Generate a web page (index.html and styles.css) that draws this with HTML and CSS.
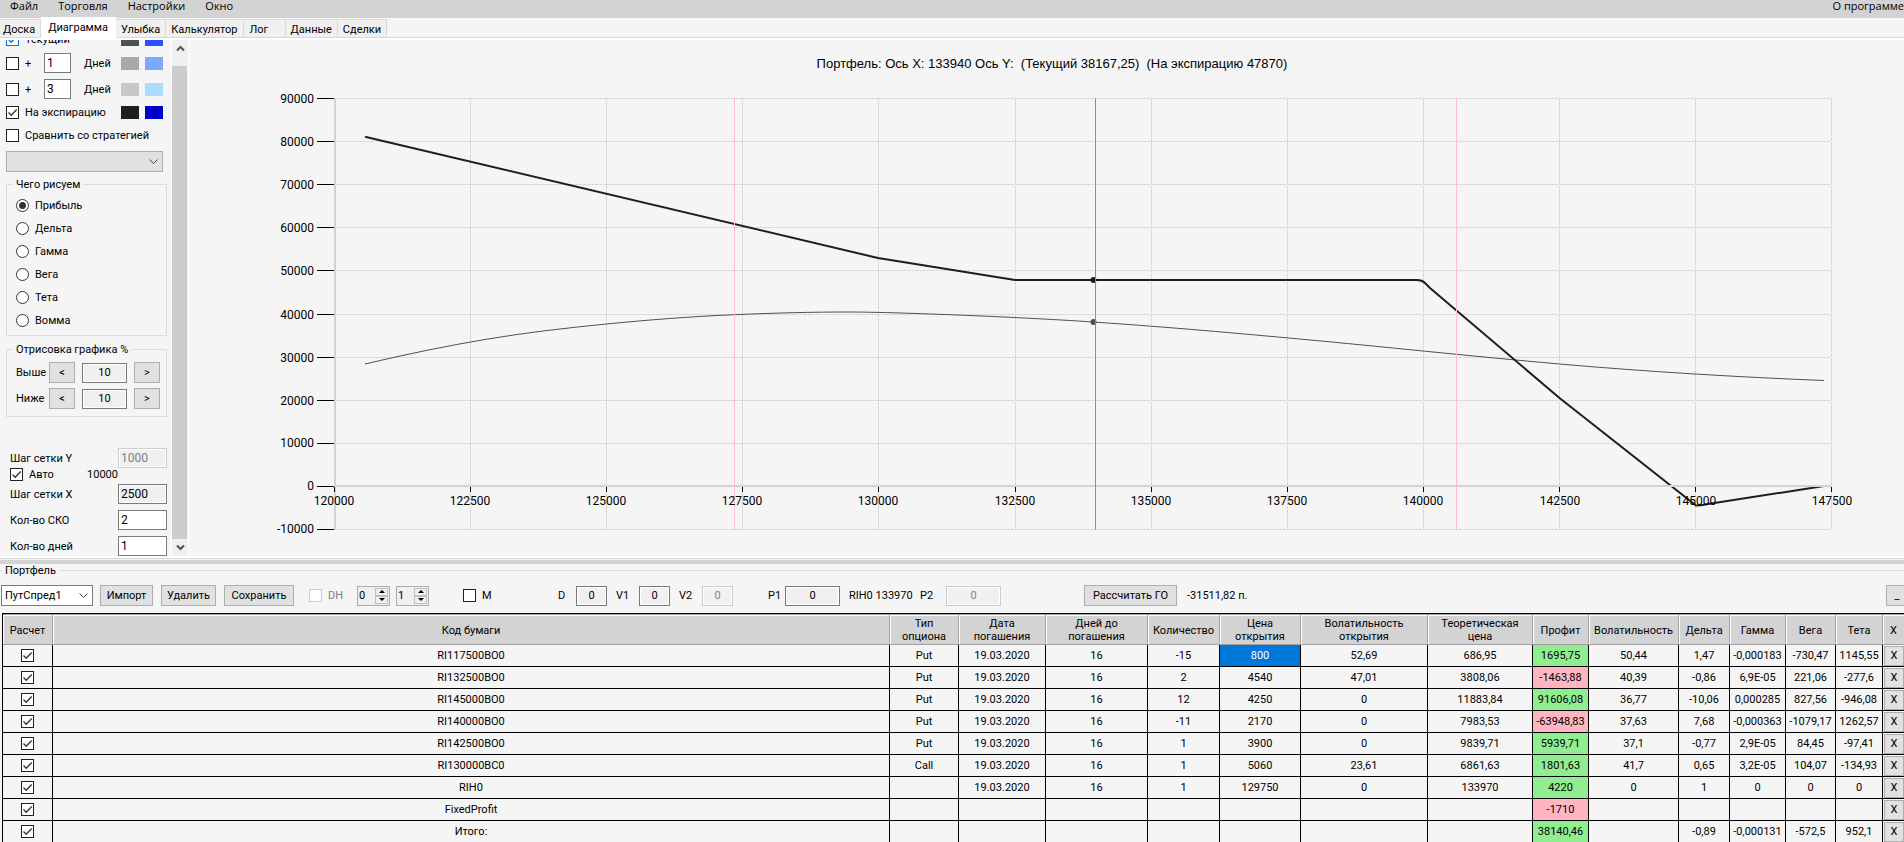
FILE: index.html
```html
<!DOCTYPE html>
<html lang="ru">
<head>
<meta charset="utf-8">
<title>Портфель</title>
<link rel="stylesheet" href="styles.css">
</head>
<body>
<nav class="menu">
  <button>Файл</button><button>Торговля</button><button>Настройки</button><button>Окно</button>
  <button class="about">О программе</button>
</nav>
<div class="tabs" role="tablist">
  <button role="tab" class="tab tab-first">Доска</button>
  <button role="tab" class="tab active" aria-selected="true">Диаграмма</button>
  <button role="tab" class="tab">Улыбка</button>
  <button role="tab" class="tab tab-wide">Калькулятор</button>
  <button role="tab" class="tab tab-log">Лог</button>
  <button role="tab" class="tab">Данные</button>
  <button role="tab" class="tab">Сделки</button>
</div>
<main class="workspace">
  <aside class="settings">
    <div class="options">
      <div class="series"><label class="check"><input type="checkbox" class="blue" checked>Текущий</label><i class="swatch s1"></i><i class="swatch s2"></i></div>
      <div class="series tall"><label class="check"><input type="checkbox">+</label><input class="box day" type="text" value="1" aria-label="Дней, первая линия"><span class="unit">Дней</span><i class="swatch s3"></i><i class="swatch s4"></i></div>
      <div class="series tall"><label class="check"><input type="checkbox">+</label><input class="box day" type="text" value="3" aria-label="Дней, вторая линия"><span class="unit">Дней</span><i class="swatch s5"></i><i class="swatch s6"></i></div>
      <div class="series expiry"><label class="check"><input type="checkbox" checked>На экспирацию</label><i class="swatch s7"></i><i class="swatch s8"></i></div>
      <label class="check compare"><input type="checkbox">Сравнить со стратегией</label>
      <select class="strategy" aria-label="Стратегия"><option></option></select>
      <fieldset class="group kinds">
        <legend>Чего рисуем</legend>
        <label><input type="radio" name="kind" checked>Прибыль</label>
        <label><input type="radio" name="kind">Дельта</label>
        <label><input type="radio" name="kind">Гамма</label>
        <label><input type="radio" name="kind">Вега</label>
        <label><input type="radio" name="kind">Тета</label>
        <label><input type="radio" name="kind">Вомма</label>
      </fieldset>
      <fieldset class="group range">
        <legend>Отрисовка графика %</legend>
        <label for="above">Выше</label><button class="btn">&lt;</button><input id="above" class="box flat mid" type="text" value="10"><button class="btn">&gt;</button>
        <label for="below">Ниже</label><button class="btn">&lt;</button><input id="below" class="box flat mid" type="text" value="10"><button class="btn">&gt;</button>
      </fieldset>
      <div class="grid-form">
        <label for="sy">Шаг сетки Y</label><input id="sy" class="box flat" type="text" value="1000" disabled>
        <div class="auto"><label class="check"><input type="checkbox" checked>Авто</label><span>10000</span></div>
        <label for="sx">Шаг сетки X</label><input id="sx" class="box flat" type="text" value="2500">
      </div>
      <div class="grid-form lower">
        <label for="sko">Кол-во СКО</label><input id="sko" class="box" type="text" value="2">
        <label for="days">Кол-во дней</label><input id="days" class="box" type="text" value="1">
      </div>
    </div>
    <div class="scrollbar">
      <button aria-label="Вверх"><svg width="9" height="7" viewBox="0 0 9 7"><path d="M1 5.500 4.500 2 8 5.500" fill="none" stroke="#505050" stroke-width="2"/></svg></button>
      <div class="thumb"></div>
      <button aria-label="Вниз"><svg width="9" height="7" viewBox="0 0 9 7"><path d="M1 1.500 4.500 5 8 1.500" fill="none" stroke="#505050" stroke-width="2"/></svg></button>
    </div>
  </aside>
  <svg class="chart" viewBox="0 0 1715 516">
    <text class="chart-title" x="863" y="28" text-anchor="middle">Портфель: Ось X: 133940 Ось Y:&#160; (Текущий 38167,25)&#160; (На экспирацию 47870)</text>
    <path class="gridline" d="M146 58.500H1642M146 101.500H1642M146 144.500H1642M146 187.500H1642M146 230.500H1642M146 274.500H1642M146 317.500H1642M146 360.500H1642M146 403.500H1642M146 489.500H1642"/>
    <path class="gridline" d="M281.500 58V490M417.500 58V490M553.500 58V490M689.500 58V490M826.500 58V490M962.500 58V490M1098.500 58V490M1234.500 58V490M1370.500 58V490M1506.500 58V490M1642.500 58V490"/>
    <path class="curve-now" d="M176 324C216 314.500 257 306 297 299.300S377 288 417.500 284S502 276.500 545 274.700S622 272 661 272S823 276.500 904 282S1045 293 1116 299.500S1285 316.500 1370.500 324S1547 337 1635 340.500"/>
    <path class="curve-exp" d="M176 96.700 689 218 826 240H1228Q1233 240 1236 243L1241 248 1370.500 358 1507 465.500 1512 465.300 1519 464 1635 446"/>
    <circle cx="904.500" cy="240" r="3" fill="#1e1e1e"/>
    <circle cx="904.500" cy="282" r="3" fill="#505050"/>
    <path class="axis" d="M146 58V490M145 446H1642"/>
    <path class="sigma" d="M545.500 58V490M1267.500 58V490"/>
    <path class="price" d="M906.500 58V490"/>
    <path class="ticks" d="M128 58.500H145M128 101.500H145M128 144.500H145M128 187.500H145M128 230.500H145M128 274.500H145M128 317.500H145M128 360.500H145M128 403.500H145M128 446.500H145M128 489.500H145M145.500 447V452M281.500 447V452M417.500 447V452M553.500 447V452M689.500 447V452M826.500 447V452M962.500 447V452M1098.500 447V452M1234.500 447V452M1370.500 447V452M1506.500 447V452M1642.500 447V452"/>
    <g class="labels" text-anchor="end">
      <text x="125" y="63">90000</text><text x="125" y="106">80000</text><text x="125" y="149">70000</text><text x="125" y="192">60000</text><text x="125" y="235">50000</text><text x="125" y="279">40000</text><text x="125" y="322">30000</text><text x="125" y="365">20000</text><text x="125" y="407">10000</text><text x="125" y="450">0</text><text x="125" y="493">-10000</text>
    </g>
    <g class="labels" text-anchor="middle">
      <text x="145" y="465">120000</text><text x="281" y="465">122500</text><text x="417" y="465">125000</text><text x="553" y="465">127500</text><text x="689" y="465">130000</text><text x="826" y="465">132500</text><text x="962" y="465">135000</text><text x="1098" y="465">137500</text><text x="1234" y="465">140000</text><text x="1371" y="465">142500</text><text x="1507" y="465">145000</text><text x="1643" y="465">147500</text>
    </g>
  </svg>
</main>
<div class="splitter"></div>
<section class="portfolio">
  <h2 class="heading">Портфель</h2>
  <div class="toolbar">
    <select class="preset" aria-label="Портфель"><option>ПутСпред1</option></select>
    <button class="btn b-import">Импорт</button>
    <button class="btn b-delete">Удалить</button>
    <button class="btn b-save">Сохранить</button>
    <label class="check off"><input type="checkbox" disabled>DH</label>
    <span class="spin"><input type="text" value="0" aria-label="DH от"><button aria-label="Больше"><i class="up"></i></button><button aria-label="Меньше"><i class="down"></i></button></span>
    <span class="spin"><input type="text" value="1" aria-label="DH до"><button aria-label="Больше"><i class="up"></i></button><button aria-label="Меньше"><i class="down"></i></button></span>
    <label class="check"><input type="checkbox">M</label>
    <label for="d">D</label><input id="d" class="box mid w-s" type="text" value="0">
    <label for="v1">V1</label><input id="v1" class="box mid w-s" type="text" value="0">
    <label for="v2">V2</label><input id="v2" class="box mid w-s" type="text" value="0" disabled>
    <label for="p1">P1</label><input id="p1" class="box mid w-m" type="text" value="0">
    <span>RIH0 133970</span>
    <label for="p2">P2</label><input id="p2" class="box mid w-m" type="text" value="0" disabled>
    <button class="btn b-calc">Рассчитать ГО</button>
    <span>-31511,82 п.</span>
    <button class="btn b-min">_</button>
  </div>
  <table class="positions">
    <colgroup><col class="c50"><col><col class="c69"><col class="c87"><col class="c102"><col class="c72"><col class="c81"><col class="c127"><col class="c105"><col class="c56"><col class="c90"><col class="c51"><col class="c56"><col class="c50"><col class="c47"><col class="c21"></colgroup>
    <thead><tr><th>Расчет</th><th>Код бумаги</th><th>Тип<br>опциона</th><th>Дата<br>погашения</th><th>Дней до<br>погашения</th><th>Количество</th><th>Цена<br>открытия</th><th>Волатильность<br>открытия</th><th>Теоретическая<br>цена</th><th>Профит</th><th>Волатильность</th><th>Дельта</th><th>Гамма</th><th>Вега</th><th>Тета</th><th>X</th></tr></thead>
    <tbody>
    <tr><td><input type="checkbox" checked aria-label="RI117500BO0"></td><td>RI117500BO0</td><td>Put</td><td>19.03.2020</td><td>16</td><td>-15</td><td class="sel">800</td><td>52,69</td><td>686,95</td><td class="gain">1695,75</td><td>50,44</td><td>1,47</td><td>-0,000183</td><td>-730,47</td><td>1145,55</td><td><button class="x">X</button></td></tr>
    <tr><td><input type="checkbox" checked aria-label="RI132500BO0"></td><td>RI132500BO0</td><td>Put</td><td>19.03.2020</td><td>16</td><td>2</td><td>4540</td><td>47,01</td><td>3808,06</td><td class="loss">-1463,88</td><td>40,39</td><td>-0,86</td><td>6,9E-05</td><td>221,06</td><td>-277,6</td><td><button class="x">X</button></td></tr>
    <tr><td><input type="checkbox" checked aria-label="RI145000BO0"></td><td>RI145000BO0</td><td>Put</td><td>19.03.2020</td><td>16</td><td>12</td><td>4250</td><td>0</td><td>11883,84</td><td class="gain">91606,08</td><td>36,77</td><td>-10,06</td><td>0,000285</td><td>827,56</td><td>-946,08</td><td><button class="x">X</button></td></tr>
    <tr><td><input type="checkbox" checked aria-label="RI140000BO0"></td><td>RI140000BO0</td><td>Put</td><td>19.03.2020</td><td>16</td><td>-11</td><td>2170</td><td>0</td><td>7983,53</td><td class="loss">-63948,83</td><td>37,63</td><td>7,68</td><td>-0,000363</td><td>-1079,17</td><td>1262,57</td><td><button class="x">X</button></td></tr>
    <tr><td><input type="checkbox" checked aria-label="RI142500BO0"></td><td>RI142500BO0</td><td>Put</td><td>19.03.2020</td><td>16</td><td>1</td><td>3900</td><td>0</td><td>9839,71</td><td class="gain">5939,71</td><td>37,1</td><td>-0,77</td><td>2,9E-05</td><td>84,45</td><td>-97,41</td><td><button class="x">X</button></td></tr>
    <tr><td><input type="checkbox" checked aria-label="RI130000BC0"></td><td>RI130000BC0</td><td>Call</td><td>19.03.2020</td><td>16</td><td>1</td><td>5060</td><td>23,61</td><td>6861,63</td><td class="gain">1801,63</td><td>41,7</td><td>0,65</td><td>3,2E-05</td><td>104,07</td><td>-134,93</td><td><button class="x">X</button></td></tr>
    <tr><td><input type="checkbox" checked aria-label="RIH0"></td><td>RIH0</td><td></td><td>19.03.2020</td><td>16</td><td>1</td><td>129750</td><td>0</td><td>133970</td><td class="gain">4220</td><td>0</td><td>1</td><td>0</td><td>0</td><td>0</td><td><button class="x">X</button></td></tr>
    <tr><td><input type="checkbox" checked aria-label="FixedProfit"></td><td>FixedProfit</td><td></td><td></td><td></td><td></td><td></td><td></td><td></td><td class="loss">-1710</td><td></td><td></td><td></td><td></td><td></td><td><button class="x">X</button></td></tr>
    <tr><td><input type="checkbox" checked aria-label="Итого"></td><td>Итого:</td><td></td><td></td><td></td><td></td><td></td><td></td><td></td><td class="gain">38140,46</td><td></td><td>-0,89</td><td>-0,000131</td><td>-572,5</td><td>952,1</td><td><button class="x">X</button></td></tr>
    </tbody>
  </table>
</section>
</body>
</html>
```
FILE: styles.css
```css
* { box-sizing: border-box; }
body {
  margin: 0;
  height: 100vh;
  overflow: hidden;
  background: #f5f5f5;
  color: #000;
  font: 11px/13px Roboto, "Liberation Sans", sans-serif;
}
button, input, select { font: inherit; color: inherit; margin: 0; }

.menu { display: flex; gap: 20px; padding: 0 0 6px 10px; background: #d3d3d3; white-space: nowrap; }
.menu button { border: 0; padding: 0; background: none; font: 11px/12px "Open Sans", "Noto Sans", sans-serif; }
.menu .about { margin-left: auto; }

.tabs { display: flex; align-items: flex-end; height: 22px; border-bottom: 2px solid #fff; box-shadow: inset 0 -1px #d9d9d9; }
.tab { height: 19px; padding: 2px 5px 0; border: 1px solid #d9d9d9; border-left: 0; background: #f0f0f0; }
.tab-first { padding-left: 3px; }
.tab.active { height: 21px; padding: 0 7px 1px; background: #fff; border-color: #fff; }
.tab-log { width: 42px; text-align: left; padding-left: 6px; }

.workspace { display: flex; }
.settings { flex: 0 0 189px; display: flex; overflow: hidden; contain: size; border-right: 1px solid #fff; }
.options { flex: 1; display: flex; flex-direction: column; justify-content: flex-end; padding-left: 6px; border-right: 1px solid #fff; }
.chart { flex: 1; min-width: 0; display: block; }

input[type="checkbox"] {
  appearance: none; flex: none; width: 13px; height: 13px;
  border: 1px solid #222; background: #fff; vertical-align: middle;
}
input[type="checkbox"]:checked {
  background: #fff url("data:image/svg+xml,%3Csvg xmlns='http://www.w3.org/2000/svg' width='11' height='11'%3E%3Cpath d='M1.500 5.500 4.200 8.200 9.700 2.500' fill='none' stroke='%23333' stroke-width='1.300'/%3E%3C/svg%3E") center no-repeat;
}
input[type="checkbox"].blue {
  border-color: #0078d7;
  background-image: url("data:image/svg+xml,%3Csvg xmlns='http://www.w3.org/2000/svg' width='11' height='11'%3E%3Cpath d='M1.500 5.500 4.200 8.200 9.700 2.500' fill='none' stroke='%230078d7' stroke-width='1.300'/%3E%3C/svg%3E");
}
input[type="checkbox"]:disabled { border-color: #ccc; }
.check { display: flex; align-items: center; gap: 6px; white-space: nowrap; }
.off { color: #808080; }

.box { height: 20px; padding: 0 2px; border: 1px solid #7a7a7a; background: #fff; border-radius: 0; min-width: 0; }
.options .box { font-size: 12px; }
.box.flat, .toolbar .box { background: #f0f0f0; box-shadow: inset 0 0 0 1px #fff; }
.box:disabled { border-color: #ccc; color: #808080; }
.options .mid { text-align: center; font-size: 11px; }
.mid { text-align: center; }
.btn { height: 21px; padding: 0; border: 1px solid #adadad; background: #e1e1e1; }
select {
  appearance: none; height: 21px; padding: 0 3px; border: 1px solid #adadad; border-radius: 0;
  background: #e1e1e1 url("data:image/svg+xml,%3Csvg xmlns='http://www.w3.org/2000/svg' width='9' height='6'%3E%3Cpath d='M.5.5 4.500 4.500 8.500.5' fill='none' stroke='%23444'/%3E%3C/svg%3E") right 4px center no-repeat;
}

.series { display: flex; align-items: center; gap: 6px; width: 157px; height: 13px; flex: none; margin-bottom: 7px; }
.series .check:first-child { margin-right: auto; }
.series.tall { height: 20px; margin-bottom: 6px; }
.day { width: 27px; }
.unit { width: 31px; margin-left: 7px; }
.swatch { width: 18px; height: 13px; }
.s1 { background: #505050; } .s2 { background: #2850ff; }
.s3 { background: #a9a9a9; } .s4 { background: #78aaff; }
.s5 { background: #c8c8c8; } .s6 { background: #aadcff; }
.s7 { background: #1e1e1e; } .s8 { background: #0000c8; }
.expiry { margin: 1px 0 10px; }
.compare { margin-bottom: 9px; }
.strategy { width: 157px; flex: none; margin-bottom: 6px; }

.group { width: 161px; flex: none; margin: 0; padding: 0; border: 1px solid #dcdcdc; }
.group legend { margin-left: -3px; padding: 0 3px; }
.kinds { display: flex; flex-direction: column; gap: 10px; padding: 8px 0 8px 9px; }
.kinds label { display: flex; align-items: center; gap: 6px; height: 13px; }
.kinds input { appearance: none; width: 13px; height: 13px; border: 1px solid #333; border-radius: 50%; background: #fff; }
.kinds input:checked { background: radial-gradient(circle, #333 3px, #fff 4px); }
.range { display: grid; grid-template-columns: 33px 33px 52px 26px; row-gap: 5px; align-items: center; padding: 6px 0 7px 9px; margin: 7px 0 31px; }
.range .btn { width: 26px; }
.range .box { width: 45px; }
.grid-form { display: grid; grid-template-columns: 108px 49px; align-items: center; padding-left: 4px; }
.auto { grid-column: 1 / -1; display: flex; width: 108px; justify-content: space-between; padding-bottom: 3px; }
.lower { row-gap: 6px; margin-top: 6px; }

.scrollbar { flex: 0 0 16px; display: flex; flex-direction: column; background: #f0f0f0; }
.scrollbar button { height: 17px; border: 0; padding: 0; background: none; }
.scrollbar .thumb { flex: 1; width: 15px; margin-top: 9px; background: #cdcdcd; }

.chart-title { font-family: "Liberation Sans", Arial, sans-serif; font-size: 13px; }
.gridline { fill: none; stroke: #d3d3d3; stroke-dasharray: 3 1; }
.axis { fill: none; stroke: #d3d3d3; stroke-width: 2; }
.curve-now { fill: none; stroke: #505050; }
.curve-exp { fill: none; stroke: #1e1e1e; stroke-width: 2; }
.sigma { stroke: #ffc0cb; }
.price { stroke: #8093a4; }
.ticks { stroke: #000; }
.labels { font-size: 12px; }

.splitter { height: 8px; border-top: 2px solid #fff; border-bottom: 4px solid #d3d3d3; box-shadow: inset 0 1px #d9d9d9; }

.heading { display: flex; align-items: center; gap: 3px; margin: 0; font: inherit; }
.heading::before, .heading::after { content: ""; height: 1px; background: #dcdcdc; width: 2px; }
.heading::after { flex: 1; }
.toolbar {
  display: grid; align-items: center; white-space: nowrap; padding: 7px 0 6px 1px; height: 36px;
  grid-template-columns: 99px 61px 63px 85px 48px 39px 67px 95px 18px 40px 23px 40px 23px 66px 17px 64px 71px 26px 138px 103px 1fr 18px;
}
.preset { width: 92px; border-color: #7a7a7a; background-color: #fff; }
.b-import { width: 53px; } .b-delete { width: 55px; } .b-save { width: 70px; } .b-calc { width: 93px; } .b-min { width: 22px; }
.w-s { width: 31px; } .w-m { width: 55px; }
.spin { display: grid; grid-template-columns: 1fr 13px; grid-template-rows: 8px 8px; width: 33px; padding: 1px; border: 1px solid #adadad; background: #f0f0f0; }
.spin input { grid-row: 1 / 3; min-width: 0; padding: 0; border: 0; background: none; }
.spin button { padding: 0; border: 1px solid #c0c0c0; background: #f0f0f0; display: grid; place-items: center; }
.spin i { border: 3px solid transparent; }
.spin .up { border-top: 0; border-bottom-color: #000; }
.spin .down { border-bottom: 0; border-top-color: #000; }

.positions { width: calc(100% - 2px); margin-left: 2px; table-layout: fixed; border-collapse: separate; border-spacing: 0; border-top: 1px solid #000; border-left: 1px solid #000; text-align: center; white-space: nowrap; }
.positions th { height: 31px; padding: 1px 0 0; font-weight: normal; background: #d3d3d3; border: solid #a0a0a0; border-width: 1px 1px 1px 0; box-shadow: inset 1px 1px #fff; }
.positions td { height: 22px; padding: 0; border-right: 1px solid #000; border-bottom: 1px solid #000; line-height: 13px; }
.positions td input { display: block; margin: 0 auto; }
.positions th:last-child, .positions td:last-child { border-right: 0; }
.c50 { width: 50px; } .c69 { width: 69px; } .c87 { width: 87px; } .c102 { width: 102px; } .c72 { width: 72px; } .c81 { width: 81px; }
.c127 { width: 127px; } .c105 { width: 105px; } .c56 { width: 56px; } .c90 { width: 90px; } .c51 { width: 51px; } .c47 { width: 47px; } .c21 { width: 21px; }
.sel { background: #0078d7; color: #fff; }
.gain { background: #90ee90; }
.loss { background: #ffb6c1; }
.x { display: block; width: 20px; height: 20px; margin-left: 1px; padding: 0; border: 1px solid #adadad; background: #e1e1e1; }
```
